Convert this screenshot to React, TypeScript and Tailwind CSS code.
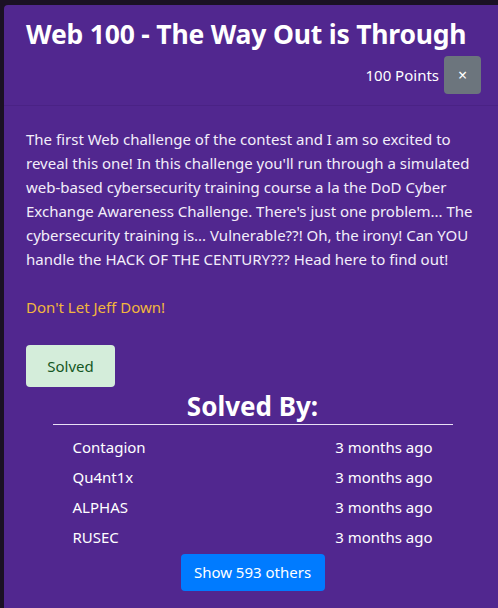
const solvers = [
  { name: "Contagion", when: "3 months ago" },
  { name: "Qu4nt1x", when: "3 months ago" },
  { name: "ALPHAS", when: "3 months ago" },
  { name: "RUSEC", when: "3 months ago" },
];

export default function App() {
  return (
    <div
      className="w-[498px] h-[608px] overflow-hidden bg-[#1b1124] pl-[4px] pt-[5px]"
      style={{ fontFamily: '"Noto Sans", "Open Sans", sans-serif' }}
    >
      <div className="w-[497px] h-full bg-[#51278f] text-white rounded-tl-[4px]">
        {/* header */}
        <div className="pl-[22px] pr-[20px] pt-[12px] pb-[11px] border-b border-[#4a2285]">
          <h1 className="text-[26.5px] font-bold leading-[34px] tracking-[-0.2px]">
            Web 100 - The Way Out is Through
          </h1>
          <div className="flex items-center justify-end gap-[5px] mt-[5px]">
            <span className="text-[15px]">100 Points</span>
            <button className="w-[37px] h-[38px] rounded-[4px] bg-[#6c757d] flex items-center justify-center text-[16px] leading-none">
              ×
            </button>
          </div>
        </div>

        {/* body */}
        <div className="px-[22px] pt-[21px]">
          <p className="text-[15px] leading-[24px] text-[#f3eefa] pr-[4px]">
            The first Web challenge of the contest and I am so excited to reveal this one! In this challenge you'll run
            through a simulated web-based cybersecurity training course a la the DoD Cyber Exchange Awareness
            Challenge. There's just one problem... The cybersecurity training is... Vulnerable??! Oh, the irony! Can
            YOU handle the HACK OF THE CENTURY??? Head here to find out!
          </p>
          <p className="text-[15px] leading-[24px] text-[#f2b63d] mt-[24px]">Don't Let Jeff Down!</p>

          <div className="mt-[26px]">
            <span className="inline-flex items-center justify-center w-[89px] h-[42px] rounded-[4px] bg-[#d4edda] text-[#155724] text-[15px]">
              Solved
            </span>
          </div>

          <div className="flex flex-col items-center">
            <h2 className="text-[26px] font-bold leading-[34px] mt-[2px]">Solved By:</h2>
            <div className="w-[400px] h-px bg-[#e9e0f5] mt-[1px]" />
            <div className="w-[400px] px-[20px] pt-[7px]">
              {solvers.map((s) => (
                <div key={s.name} className="flex justify-between h-[30px] items-center text-[15px]">
                  <span>{s.name}</span>
                  <span>{s.when}</span>
                </div>
              ))}
            </div>
            <button className="mt-[2px] w-[144px] h-[37px] rounded-[4px] bg-[#007bff] text-[15px]">
              Show 593 others
            </button>
          </div>
        </div>
      </div>
    </div>
  );
}
